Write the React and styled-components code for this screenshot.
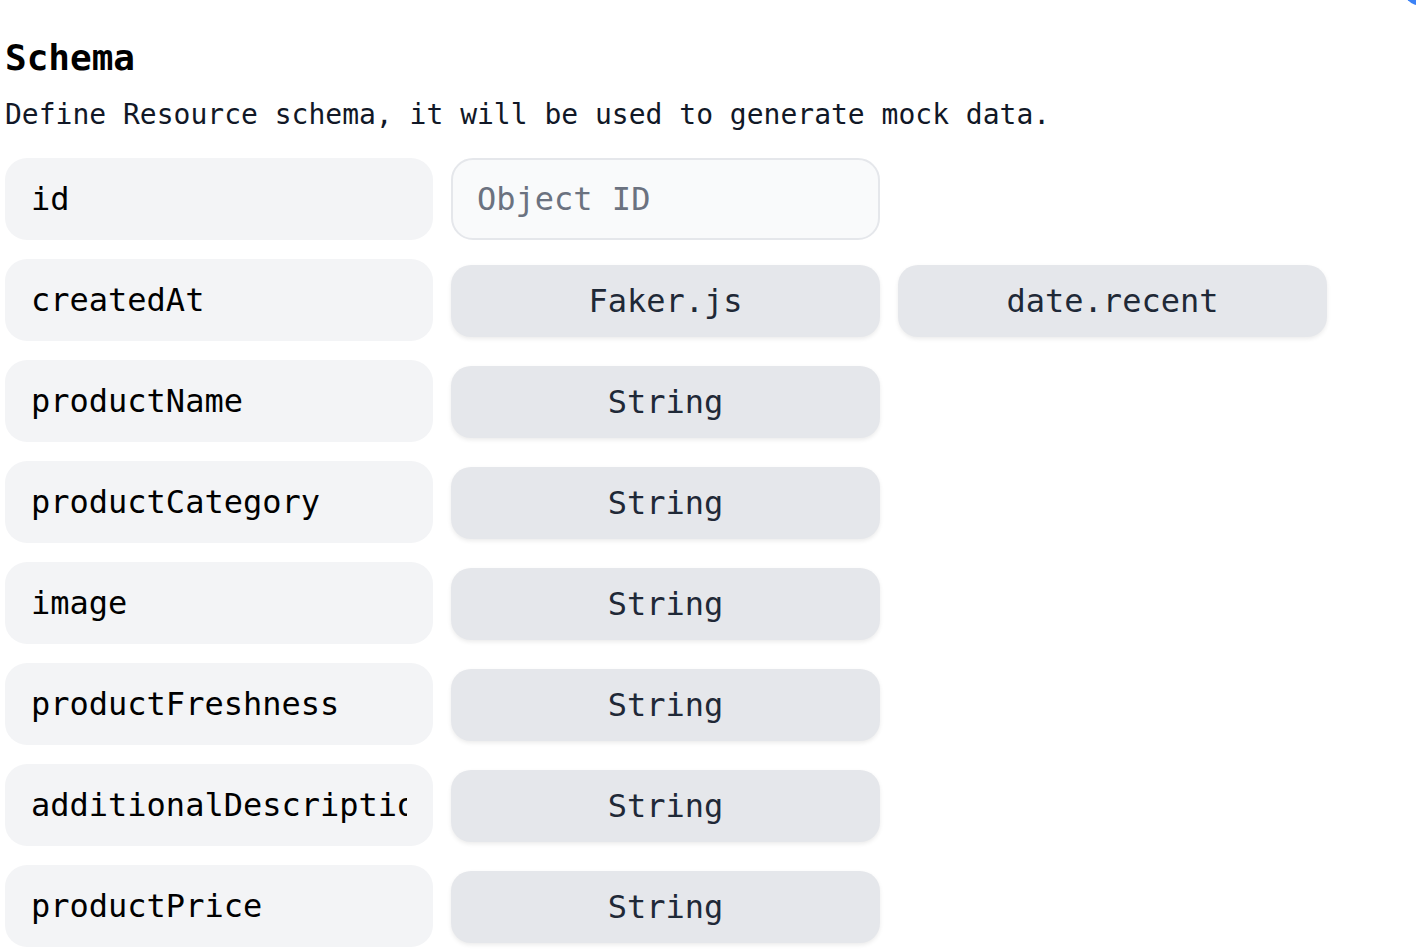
import React from 'react';
import styled, { createGlobalStyle } from 'styled-components';

const GlobalStyle = createGlobalStyle`
  html, body {
    margin: 0;
    padding: 0;
    background: #ffffff;
    overflow: hidden;
  }
  body {
    font-family: "DejaVu Sans Mono", "Liberation Mono", monospace;
  }
`;

const Page = styled.div`
  position: relative;
  width: 1416px;
  height: 952px;
  padding: 36px 0 0 5px;
  box-sizing: border-box;
  overflow: hidden;
`;

const Corner = styled.div`
  position: absolute;
  top: -34px;
  right: -26px;
  width: 40px;
  height: 40px;
  border-radius: 50%;
  background: #3b82f6;
`;

const Title = styled.h2`
  margin: 0;
  font-size: 36px;
  line-height: 44px;
  font-weight: 700;
  color: #000;
`;

const Subtitle = styled.p`
  margin: 18px 0 26px;
  font-size: 28px;
  line-height: 34px;
  color: #111827;
`;

const Grid = styled.div`
  display: grid;
  grid-template-columns: 428px 429px 429px;
  grid-auto-rows: 82px;
  column-gap: 18px;
  row-gap: 19px;
`;

const FieldName = styled.input`
  box-sizing: border-box;
  width: 100%;
  height: 82px;
  padding: 0 26px;
  border: none;
  border-radius: 22px;
  background: #f3f4f6;
  font-family: inherit;
  font-size: 32px;
  color: #000;
  outline: none;
`;

const Placeholder = styled.input`
  box-sizing: border-box;
  width: 100%;
  height: 82px;
  padding: 0 24px;
  border: 2px solid #e5e7eb;
  border-radius: 22px;
  background: #f9fafb;
  font-family: inherit;
  font-size: 32px;
  color: #111827;
  outline: none;

  &::placeholder {
    color: #6b7280;
  }
`;

const TypeButton = styled.button`
  align-self: center;
  height: 72px;
  margin-top: 2px;
  border: none;
  border-radius: 20px;
  background: #e5e7eb;
  box-shadow: 0 2px 4px rgba(0, 0, 0, 0.08);
  font-family: inherit;
  font-size: 32px;
  color: #1f2937;
  cursor: pointer;
`;

const Empty = styled.div``;

const schema = [
  { name: 'id', kind: 'id' },
  { name: 'createdAt', kind: 'faker', type: 'Faker.js', method: 'date.recent' },
  { name: 'productName', type: 'String' },
  { name: 'productCategory', type: 'String' },
  { name: 'image', type: 'String' },
  { name: 'productFreshness', type: 'String' },
  { name: 'additionalDescription', type: 'String' },
  { name: 'productPrice', type: 'String' },
];

const App = () => {
  return (
    <Page>
      <GlobalStyle />
      <Corner />
      <Title>Schema</Title>
      <Subtitle>Define Resource schema, it will be used to generate mock data.</Subtitle>
      <Grid>
        {schema.map(field => (
          <React.Fragment key={field.name}>
            <FieldName defaultValue={field.name} />
            {field.kind === 'id' ? (
              <Placeholder placeholder="Object ID" disabled />
            ) : (
              <TypeButton>{field.type}</TypeButton>
            )}
            {field.kind === 'faker' ? <TypeButton>{field.method}</TypeButton> : <Empty />}
          </React.Fragment>
        ))}
      </Grid>
    </Page>
  );
};

export default App;
